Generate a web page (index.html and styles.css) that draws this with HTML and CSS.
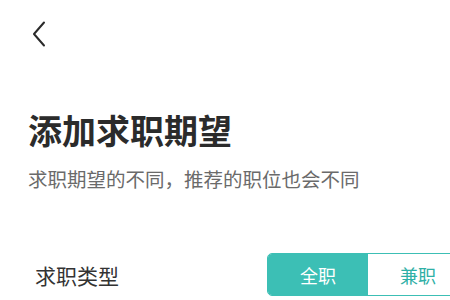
FILE: index.html
```html
<!DOCTYPE html>
<html lang="zh-CN">
<head>
<meta charset="utf-8">
<link rel="stylesheet" href="styles.css">
</head>
<body>
<div class="page">
  <div class="back">
    <svg width="14" height="26" viewBox="0 0 14 26" fill="none"><path d="M12 1.5 L2 13 L12 24.5" stroke="#2a2a2a" stroke-width="2" stroke-linecap="round" stroke-linejoin="round"/></svg>
  </div>
  <h1 class="title">添加求职期望</h1>
  <p class="subtitle">求职期望的不同，推荐的职位也会不同</p>
  <div class="row">
    <span class="label">求职类型</span>
    <div class="seg">
      <span class="opt active">全职</span>
      <span class="opt">兼职</span>
    </div>
  </div>
</div>
</body>
</html>
```
FILE: styles.css
```css
html, body {
  margin: 0;
  padding: 0;
  background: #ffffff;
  overflow: hidden;
}
body {
  width: 450px;
  height: 300px;
  font-family: "Noto Sans CJK SC", "Noto Sans", sans-serif;
}
.page {
  padding: 0 0 0 28px;
}
.back {
  padding-top: 21px;
  padding-left: 4px;
  height: 26px;
}
.back svg {
  display: block;
}
.title {
  margin: 66px 0 0 0;
  font-size: 34px;
  line-height: 34px;
  font-weight: 700;
  color: #2b2b2b;
}
.subtitle {
  margin: 21px 0 0 0;
  font-size: 19.5px;
  line-height: 21px;
  color: #6a6a6a;
}
.row {
  margin-top: 64px;
  padding-left: 7px;
  display: grid;
  grid-template-columns: 232px 200px;
  align-items: center;
}
.label {
  font-size: 21px;
  color: #333333;
}
.seg {
  display: flex;
  height: 43px;
  width: 200px;
  border: 1px solid #3cbfb5;
  border-radius: 5px;
  box-sizing: border-box;
  overflow: hidden;
}
.opt {
  flex: 0 0 100px;
  display: flex;
  align-items: center;
  justify-content: center;
  font-size: 18px;
  color: #2fb0a6;
  background: #ffffff;
}
.opt.active {
  background: #3cbfb5;
  color: #ffffff;
}
```
